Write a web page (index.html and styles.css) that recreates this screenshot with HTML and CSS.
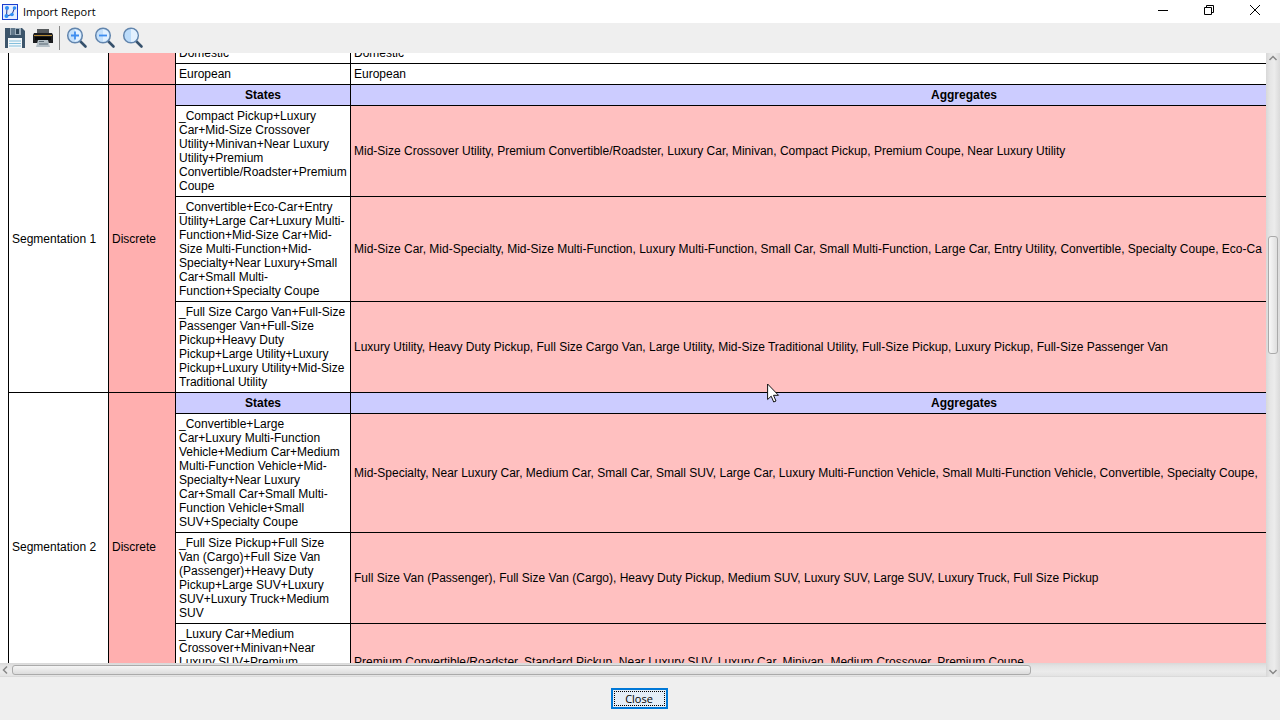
FILE: index.html
```html
<!DOCTYPE html>
<html lang="en">
<head>
<meta charset="utf-8">
<title>Import Report</title>
<link rel="stylesheet" href="styles.css">
</head>
<body>
<header class="titlebar">
  <svg class="app-icon" width="16" height="16" viewBox="0 0 16 16" aria-hidden="true">
    <rect x=".5" y=".5" width="15" height="15" fill="#e6eeff" stroke="#1a3fd0"/>
    <path d="M5 4L4.500 12L10 10.500L12.500 4" fill="none" stroke="#24308a"/>
    <circle cx="5" cy="4" r="2" fill="#2f8ef5"/><circle cx="12.500" cy="4" r="1.800" fill="#2f8ef5"/>
    <circle cx="4.500" cy="12" r="2" fill="#2f8ef5"/><circle cx="10" cy="10.500" r="1.800" fill="#2f8ef5"/>
  </svg>
  <h1 class="title">Import Report</h1>
  <div class="window-buttons">
    <button type="button" class="window-button" aria-label="Minimize"><svg width="12" height="12" viewBox="0 0 12 12"><path d="M1 6.500H11" stroke="#000"/></svg></button>
    <button type="button" class="window-button" aria-label="Restore"><svg width="12" height="12" viewBox="0 0 12 12" fill="none" stroke="#000"><path d="M1.500 3.500H8.500V10.500H1.500ZM3.500 3.500V1.500H10.500V8.500H8.500"/></svg></button>
    <button type="button" class="window-button" aria-label="Close window"><svg width="12" height="12" viewBox="0 0 12 12"><path d="M1 1L11 11M11 1L1 11" stroke="#000"/></svg></button>
  </div>
</header>
<div class="toolbar" role="toolbar" aria-label="Report tools">
  <button type="button" class="tool" aria-label="Save"><svg width="22" height="22" viewBox="0 0 22 22">
    <path d="M1 1H18L21 4V21H1Z" fill="#3c556b"/><rect x="6" y="1" width="11" height="7" fill="#9fb0be"/><rect x="7" y="1" width="4" height="7" fill="#62798c"/><rect x="12" y="2" width="3" height="5" fill="#2d4457"/>
    <rect x="4" y="11" width="14" height="10" fill="#f4f8fa"/><path d="M5 14H17M5 16.500H17M5 19H17" stroke="#84bfdc"/></svg></button>
  <button type="button" class="tool" aria-label="Print"><svg width="22" height="22" viewBox="0 0 22 22">
    <rect x="5" y="2" width="12" height="4" fill="#55595c"/><path d="M2 6H20L21 8V16H1V8Z" fill="#1c1d20"/><path d="M2 8.500H20" stroke="#b68b35"/><rect x="3" y="10" width="16" height="3" fill="#050505"/>
    <path d="M6 13H16L18 20H4Z" fill="#b4bfc6"/><path d="M7 14.500H12M7 17H16" stroke="#5c6b76"/></svg></button>
  <span class="separator"></span>
  <button type="button" class="tool" aria-label="Zoom in"><svg width="22" height="22" viewBox="0 0 22 22">
    <path d="M14 14L19.500 19.500" stroke="#36516c" stroke-width="2.600" stroke-linecap="round"/><circle cx="9" cy="8.500" r="7.300" fill="#c5e0fa" stroke="#6285ad" stroke-width="1.500"/><path d="M9 2.500A6 6 0 0 1 9 14.500Z" fill="#e3f1ff"/><path d="M9 4.500V12.500M5 8.500H13" stroke="#3d8df0" stroke-width="1.800"/></svg></button>
  <button type="button" class="tool" aria-label="Zoom out"><svg width="22" height="22" viewBox="0 0 22 22">
    <path d="M14 14L19.500 19.500" stroke="#36516c" stroke-width="2.600" stroke-linecap="round"/><circle cx="9" cy="8.500" r="7.300" fill="#c5e0fa" stroke="#6285ad" stroke-width="1.500"/><path d="M9 2.500A6 6 0 0 1 9 14.500Z" fill="#e3f1ff"/><path d="M5 8.500H13" stroke="#3d8df0" stroke-width="1.800"/></svg></button>
  <button type="button" class="tool" aria-label="Reset zoom"><svg width="22" height="22" viewBox="0 0 22 22">
    <path d="M14 14L19.500 19.500" stroke="#36516c" stroke-width="2.600" stroke-linecap="round"/><circle cx="9" cy="8.500" r="7.300" fill="#bcdcfa" stroke="#6285ad" stroke-width="1.500"/><path d="M9 2A6.500 6.500 0 0 1 9 15Z" fill="#e3f1ff"/></svg></button>
</div>
<main class="scroll-area">
  <div class="viewport">
    <table class="report">
      <colgroup><col class="col-name"><col class="col-type"><col class="col-state"><col class="col-aggregate"></colgroup>
      <tbody>
        <tr><td rowspan="2"></td><td rowspan="2" class="type"></td><td>Domestic</td><td>Domestic</td></tr>
        <tr><td>European</td><td>European</td></tr>
      </tbody>
      <tbody>
        <tr><td rowspan="4">Segmentation 1</td><td rowspan="4" class="type">Discrete</td><th>States</th><th>Aggregates</th></tr>
        <tr><td>_Compact Pickup+Luxury<br>Car+Mid-Size Crossover<br>Utility+Minivan+Near Luxury<br>Utility+Premium<br>Convertible/Roadster+Premium<br>Coupe</td><td class="merged">Mid-Size Crossover Utility, Premium Convertible/Roadster, Luxury Car, Minivan, Compact Pickup, Premium Coupe, Near Luxury Utility</td></tr>
        <tr><td>_Convertible+Eco-Car+Entry<br>Utility+Large Car+Luxury Multi-<br>Function+Mid-Size Car+Mid-<br>Size Multi-Function+Mid-<br>Specialty+Near Luxury+Small<br>Car+Small Multi-<br>Function+Specialty Coupe</td><td class="merged">Mid-Size Car, Mid-Specialty, Mid-Size Multi-Function, Luxury Multi-Function, Small Car, Small Multi-Function, Large Car, Entry Utility, Convertible, Specialty Coupe, Eco-Ca</td></tr>
        <tr><td>_Full Size Cargo Van+Full-Size<br>Passenger Van+Full-Size<br>Pickup+Heavy Duty<br>Pickup+Large Utility+Luxury<br>Pickup+Luxury Utility+Mid-Size<br>Traditional Utility</td><td class="merged">Luxury Utility, Heavy Duty Pickup, Full Size Cargo Van, Large Utility, Mid-Size Traditional Utility, Full-Size Pickup, Luxury Pickup, Full-Size Passenger Van</td></tr>
      </tbody>
      <tbody>
        <tr><td rowspan="4">Segmentation 2</td><td rowspan="4" class="type">Discrete</td><th>States</th><th>Aggregates</th></tr>
        <tr><td>_Convertible+Large<br>Car+Luxury Multi-Function<br>Vehicle+Medium Car+Medium<br>Multi-Function Vehicle+Mid-<br>Specialty+Near Luxury<br>Car+Small Car+Small Multi-<br>Function Vehicle+Small<br>SUV+Specialty Coupe</td><td class="merged">Mid-Specialty, Near Luxury Car, Medium Car, Small Car, Small SUV, Large Car, Luxury Multi-Function Vehicle, Small Multi-Function Vehicle, Convertible, Specialty Coupe,</td></tr>
        <tr><td>_Full Size Pickup+Full Size<br>Van (Cargo)+Full Size Van<br>(Passenger)+Heavy Duty<br>Pickup+Large SUV+Luxury<br>SUV+Luxury Truck+Medium<br>SUV</td><td class="merged">Full Size Van (Passenger), Full Size Van (Cargo), Heavy Duty Pickup, Medium SUV, Luxury SUV, Large SUV, Luxury Truck, Full Size Pickup</td></tr>
        <tr><td>_Luxury Car+Medium<br>Crossover+Minivan+Near<br>Luxury SUV+Premium<br>Convertible/Roadster+Premium<br>Coupe+Standard Pickup</td><td class="merged">Premium Convertible/Roadster, Standard Pickup, Near Luxury SUV, Luxury Car, Minivan, Medium Crossover, Premium Coupe</td></tr>
      </tbody>
    </table>
  </div>
  <div class="vbar">
    <svg class="arrow" width="14" height="12" viewBox="0 0 14 12"><path d="M3.500 7L7 3.500L10.500 7"/></svg>
    <div class="vtrack"><div class="vthumb"></div></div>
    <svg class="arrow" width="14" height="12" viewBox="0 0 14 12"><path d="M3.500 5L7 8.500L10.500 5"/></svg>
  </div>
  <div class="hbar">
    <svg class="arrow" width="12" height="12" viewBox="0 0 12 12"><path d="M7 2.500L3.500 6L7 9.500"/></svg>
    <div class="htrack"><div class="hthumb"></div></div>
  </div>
</main>
<footer class="footer"><button type="button" class="close-button"><span class="close-label">Close</span></button></footer>
<svg class="cursor" width="13" height="20" viewBox="0 0 13 20" aria-hidden="true"><path d="M.6 1V16.500L4.200 13.200L6.700 19L9 18L6.500 12.300H11.500Z" fill="#fff" stroke="#111"/></svg>
</body>
</html>
```
FILE: styles.css
```css
* { box-sizing: border-box; }

body {
  margin: 0;
  height: 100vh;
  display: flex;
  flex-direction: column;
  overflow: hidden;
  background: #efefef;
  color: #000;
  font: 12px/14px "Liberation Sans", Arial, sans-serif;
}

svg { display: block; }

button {
  border: 0;
  padding: 0;
  background: none;
  color: inherit;
}

.titlebar {
  display: flex;
  align-items: center;
  height: 23px;
  padding-left: 2px;
  background: #fff;
}

.title {
  flex: 1;
  margin: 0 0 0 5px;
  font: 11px/16px "Open Sans", "Noto Sans", sans-serif;
}

.window-buttons {
  display: flex;
  align-self: flex-start;
}

.window-button {
  display: grid;
  place-items: center;
  width: 46px;
  height: 20px;
}

.window-button:last-child { margin-right: 2px; }

.toolbar {
  display: flex;
  align-items: center;
  height: 30px;
  padding-left: 1px;
}

.tool {
  display: grid;
  place-items: center;
  width: 28px;
  height: 28px;
}

.separator {
  width: 1px;
  height: 24px;
  margin: 0 3px 0 2px;
  background: #888;
}

.scroll-area {
  flex: 1;
  min-height: 0;
  display: grid;
  grid-template-columns: minmax(0, 1fr) 14px;
  grid-template-rows: minmax(0, 1fr) 14px;
}

.viewport {
  overflow: hidden;
  background: #fff;
}

/* The report is scrolled part of a row past its top edge. */
.report {
  width: 1570px;
  margin: -11px 0 0 8px;
  border-collapse: collapse;
  table-layout: fixed;
}

.col-name { width: 100px; }
.col-type { width: 67px; }
.col-state { width: 175px; }

.report td,
.report th {
  padding: 3px;
  border: 1px solid #000;
  text-align: left;
  vertical-align: middle;
  white-space: nowrap;
}

.report th {
  background: #ccccff;
  text-align: center;
}

.report .type { background: #ffafaf; }
.report .merged { background: #ffc0c0; }

.vbar {
  grid-row: 1 / 3;
  grid-column: 2;
  display: flex;
  flex-direction: column;
  background: linear-gradient(90deg, #d8d8d8, #e6e6e6 30%, #ececec 60%, #dadada);
}

.vtrack {
  flex: 1;
  display: grid;
  grid-template-rows: 171fr 118fr 311fr;
  padding: 0 2px;
}

.vthumb { grid-row: 2; background: linear-gradient(90deg, #f8f8f8, #dedede); }

.vthumb,
.hthumb {
  border: 1px solid #aaa;
  border-radius: 3px;
}

.hbar {
  display: flex;
  align-items: center;
  background: linear-gradient(#d8d8d8, #e2e2e2 20%, #ebebeb 60%, #e4e4e4 90%, #d5d5d5);
}

.htrack {
  flex: 1;
  display: grid;
  grid-template-columns: 1019fr 235fr;
}

.hthumb { height: 10px; background: linear-gradient(#f5f5f5, #dcdcdc); }

.arrow {
  fill: none;
  stroke: #888;
  stroke-width: 1.5;
}

.footer {
  display: flex;
  justify-content: center;
  align-items: center;
  height: 43px;
  padding-right: 2px;
}

.close-button {
  width: 57px;
  height: 21px;
  padding: 1px;
  border: 2px solid #0078d7;
  background: #e5eef7;
  font: 11px/13px "Open Sans", "Noto Sans", sans-serif;
}

.close-label {
  display: block;
  border: 1px dotted #000;
}

.cursor {
  position: absolute;
  left: 767px;
  top: 383px;
}
```
